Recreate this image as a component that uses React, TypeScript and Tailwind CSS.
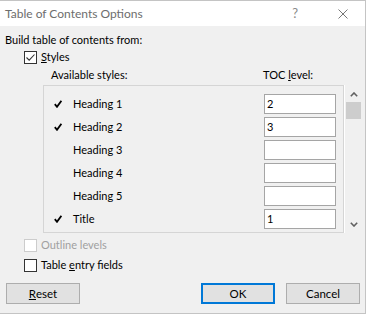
import React from 'react'

const font = { fontFamily: 'Lato, "Noto Sans", sans-serif' }

const rows = [
  { name: 'Heading 1', checked: true, level: '2' },
  { name: 'Heading 2', checked: true, level: '3' },
  { name: 'Heading 3', checked: false, level: '' },
  { name: 'Heading 4', checked: false, level: '' },
  { name: 'Heading 5', checked: false, level: '' },
  { name: 'Title', checked: true, level: '1' },
]

function Tick() {
  return (
    <svg viewBox="0 0 8 8" className="w-[8px] h-[8px]">
      <path d="M0.8 4.2 L3 6.8 L7.4 0.8" fill="none" stroke="#000" strokeWidth="1.8" />
    </svg>
  )
}

function Checkbox({ checked, disabled }: { checked?: boolean; disabled?: boolean }) {
  return (
    <div
      className={`w-[13px] h-[13px] border bg-white flex items-center justify-center ${
        disabled ? 'border-[#cccccc]' : 'border-[#333333]'
      }`}
    >
      {checked && (
        <svg viewBox="0 0 11 11" className="w-[11px] h-[11px]">
          <path d="M1.5 5.5 L4.2 8.2 L9.5 2.5" fill="none" stroke="#333" strokeWidth="1.1" />
        </svg>
      )}
    </div>
  )
}

function Btn({ children, primary }: { children: React.ReactNode; primary?: boolean }) {
  return (
    <div
      className={`w-[74px] h-[21px] flex items-center justify-center bg-[#e1e1e1] text-[11.5px] text-black ${
        primary ? 'border-2 border-[#0078d7]' : 'border border-[#adadad]'
      }`}
    >
      {children}
    </div>
  )
}

export default function App() {
  return (
    <div className="w-[368px] h-[315px] bg-white overflow-hidden" style={font}>
      <div className="w-[366px] h-[314px] bg-[#f0f0f0] border-r border-b border-t border-[#c4c4c4] flex flex-col">
        {/* title bar */}
        <div className="h-[25px] bg-white flex items-center pl-[5px] shrink-0">
          <span className="text-[12px] text-[#6d6d6d] leading-none">Table of Contents Options</span>
          <span className="ml-auto mr-[40px] text-[13px] text-[#8a8a8a] leading-none">?</span>
          <svg viewBox="0 0 10 10" className="w-[10px] h-[10px] mr-[17px]">
            <path d="M0.5 0.5 L9.5 9.5 M9.5 0.5 L0.5 9.5" stroke="#777" strokeWidth="1" />
          </svg>
        </div>

        {/* body */}
        <div className="flex flex-col pl-[5px] pt-[6px] text-[11px] text-black">
          <div className="h-[16px] leading-[16px]">Build table of contents from:</div>

          <div className="flex items-center h-[16px] mt-[1px] pl-[19px] gap-[4px]">
            <Checkbox checked />
            <span className="leading-[16px]">
              <u>S</u>tyles
            </span>
          </div>

          <div className="flex h-[16px] mt-[2px] leading-[16px]">
            <span className="ml-[46px] w-[212px]">Available styles:</span>
            <span>
              TOC <u>l</u>evel:
            </span>
          </div>

          <div className="flex mt-[2px]">
            <div className="ml-[38px] w-[301px] h-[148px] border border-[#d5d5d5] shadow-[1px_0_0_#ffffff] pt-[6px]">
              {rows.map((r) => (
                <div key={r.name} className="flex items-center h-[23px]">
                  <div className="w-[29px] pl-[10px] flex items-center">{r.checked && <Tick />}</div>
                  <span className="leading-none">{r.name}</span>
                  <div className="ml-auto mr-[7px] w-[72px] h-[20px] bg-white border border-[#a5a5a5] flex items-center pl-[2px] leading-none">
                    {r.level}
                  </div>
                </div>
              ))}
            </div>
            <div className="ml-[2px] w-[15px] h-[148px] flex flex-col items-center">
              <svg viewBox="0 0 8 5" className="w-[8px] h-[5px] mt-[7px]">
                <path d="M0.8 4.2 L4 1 L7.2 4.2" fill="none" stroke="#606060" strokeWidth="1.6" />
              </svg>
              <div className="w-[15px] h-[17px] bg-[#cdcdcd] mt-[5px]" />
              <svg viewBox="0 0 8 5" className="w-[8px] h-[5px] mt-auto mb-[6px]">
                <path d="M0.8 0.8 L4 4 L7.2 0.8" fill="none" stroke="#606060" strokeWidth="1.6" />
              </svg>
            </div>
          </div>

          <div className="flex items-center h-[16px] mt-[4px] pl-[19px] gap-[4px]">
            <Checkbox disabled />
            <span className="leading-[16px] text-[#a0a0a0]">Outline levels</span>
          </div>

          <div className="flex items-center h-[16px] mt-[4px] pl-[19px] gap-[4px]">
            <Checkbox />
            <span className="leading-[16px]">
              Table <u>e</u>ntry fields
            </span>
          </div>

          <div className="flex mt-[10px] pl-[1px]">
            <Btn>
              <u>R</u>eset
            </Btn>
            <div className="ml-auto flex gap-[11px] mr-[5px]">
              <Btn primary>OK</Btn>
              <Btn>Cancel</Btn>
            </div>
          </div>
        </div>
      </div>
    </div>
  )
}
